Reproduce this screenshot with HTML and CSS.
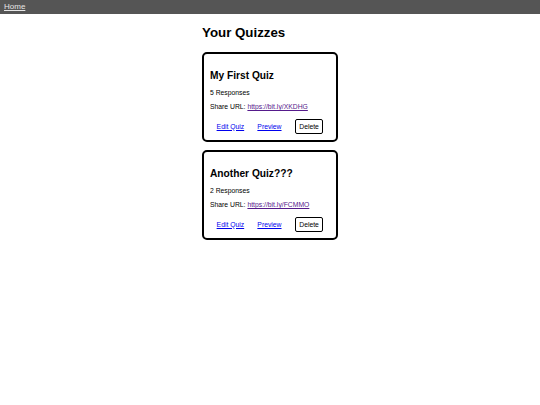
FILE: index.html
```html
<!DOCTYPE html>
<html>
<head>
<meta charset="utf-8">
<link rel="stylesheet" href="styles.css">
</head>
<body>
<nav class="topbar"><a class="home" href="#">Home</a></nav>
<main class="page">
  <h1 class="title">Your Quizzes</h1>
  <div class="card">
    <h2 class="quiz-name">My First Quiz</h2>
    <p class="info">5 Responses</p>
    <p class="info">Share URL: <a class="share" href="#">https://bit.ly/XKDHG</a></p>
    <div class="actions">
      <a class="action" href="#">Edit Quiz</a>
      <a class="action" href="#">Preview</a>
      <button class="delete">Delete</button>
    </div>
  </div>
  <div class="card">
    <h2 class="quiz-name">Another Quiz???</h2>
    <p class="info">2 Responses</p>
    <p class="info">Share URL: <a class="share" href="#">https://bit.ly/FCMMO</a></p>
    <div class="actions">
      <a class="action" href="#">Edit Quiz</a>
      <a class="action" href="#">Preview</a>
      <button class="delete">Delete</button>
    </div>
  </div>
</main>
</body>
</html>
```
FILE: styles.css
```css
html, body {
  margin: 0;
  padding: 0;
  background: #fff;
  font-family: "Liberation Sans", Arial, sans-serif;
  color: #000;
}
.topbar {
  background: #555555;
  height: 14px;
  padding: 0 4px;
  display: flex;
  align-items: center;
}
.home {
  color: #e6e6e6;
  font-size: 8px;
  line-height: 10px;
  text-decoration: underline;
}
.page {
  width: 136px;
  margin: 0 auto;
}
.title {
  font-size: 13.3px;
  font-weight: bold;
  margin: 11px 0 11px;
  line-height: 16px;
}
.card {
  border: 2px solid #000;
  border-radius: 5px;
  padding: 16px 6px 6px;
  margin-bottom: 8px;
}
.quiz-name {
  font-size: 10.2px;
  font-weight: bold;
  margin: 0 0 7px;
  line-height: 12px;
}
.info {
  font-size: 6.8px;
  line-height: 8px;
  margin: 0 0 6px;
}
.share {
  color: #551a8b;
}
.actions {
  display: flex;
  justify-content: space-around;
  align-items: center;
  margin-top: 8px;
}
.action {
  color: #0000ee;
  font-size: 6.8px;
  line-height: 8px;
}
.delete {
  font-family: "Liberation Sans", Arial, sans-serif;
  font-size: 6.8px;
  background: #fff;
  border: 1.5px solid #000;
  border-radius: 2px;
  padding: 2.5px 3.5px;
  line-height: 8px;
  color: #000;
  margin: 0;
}
```
